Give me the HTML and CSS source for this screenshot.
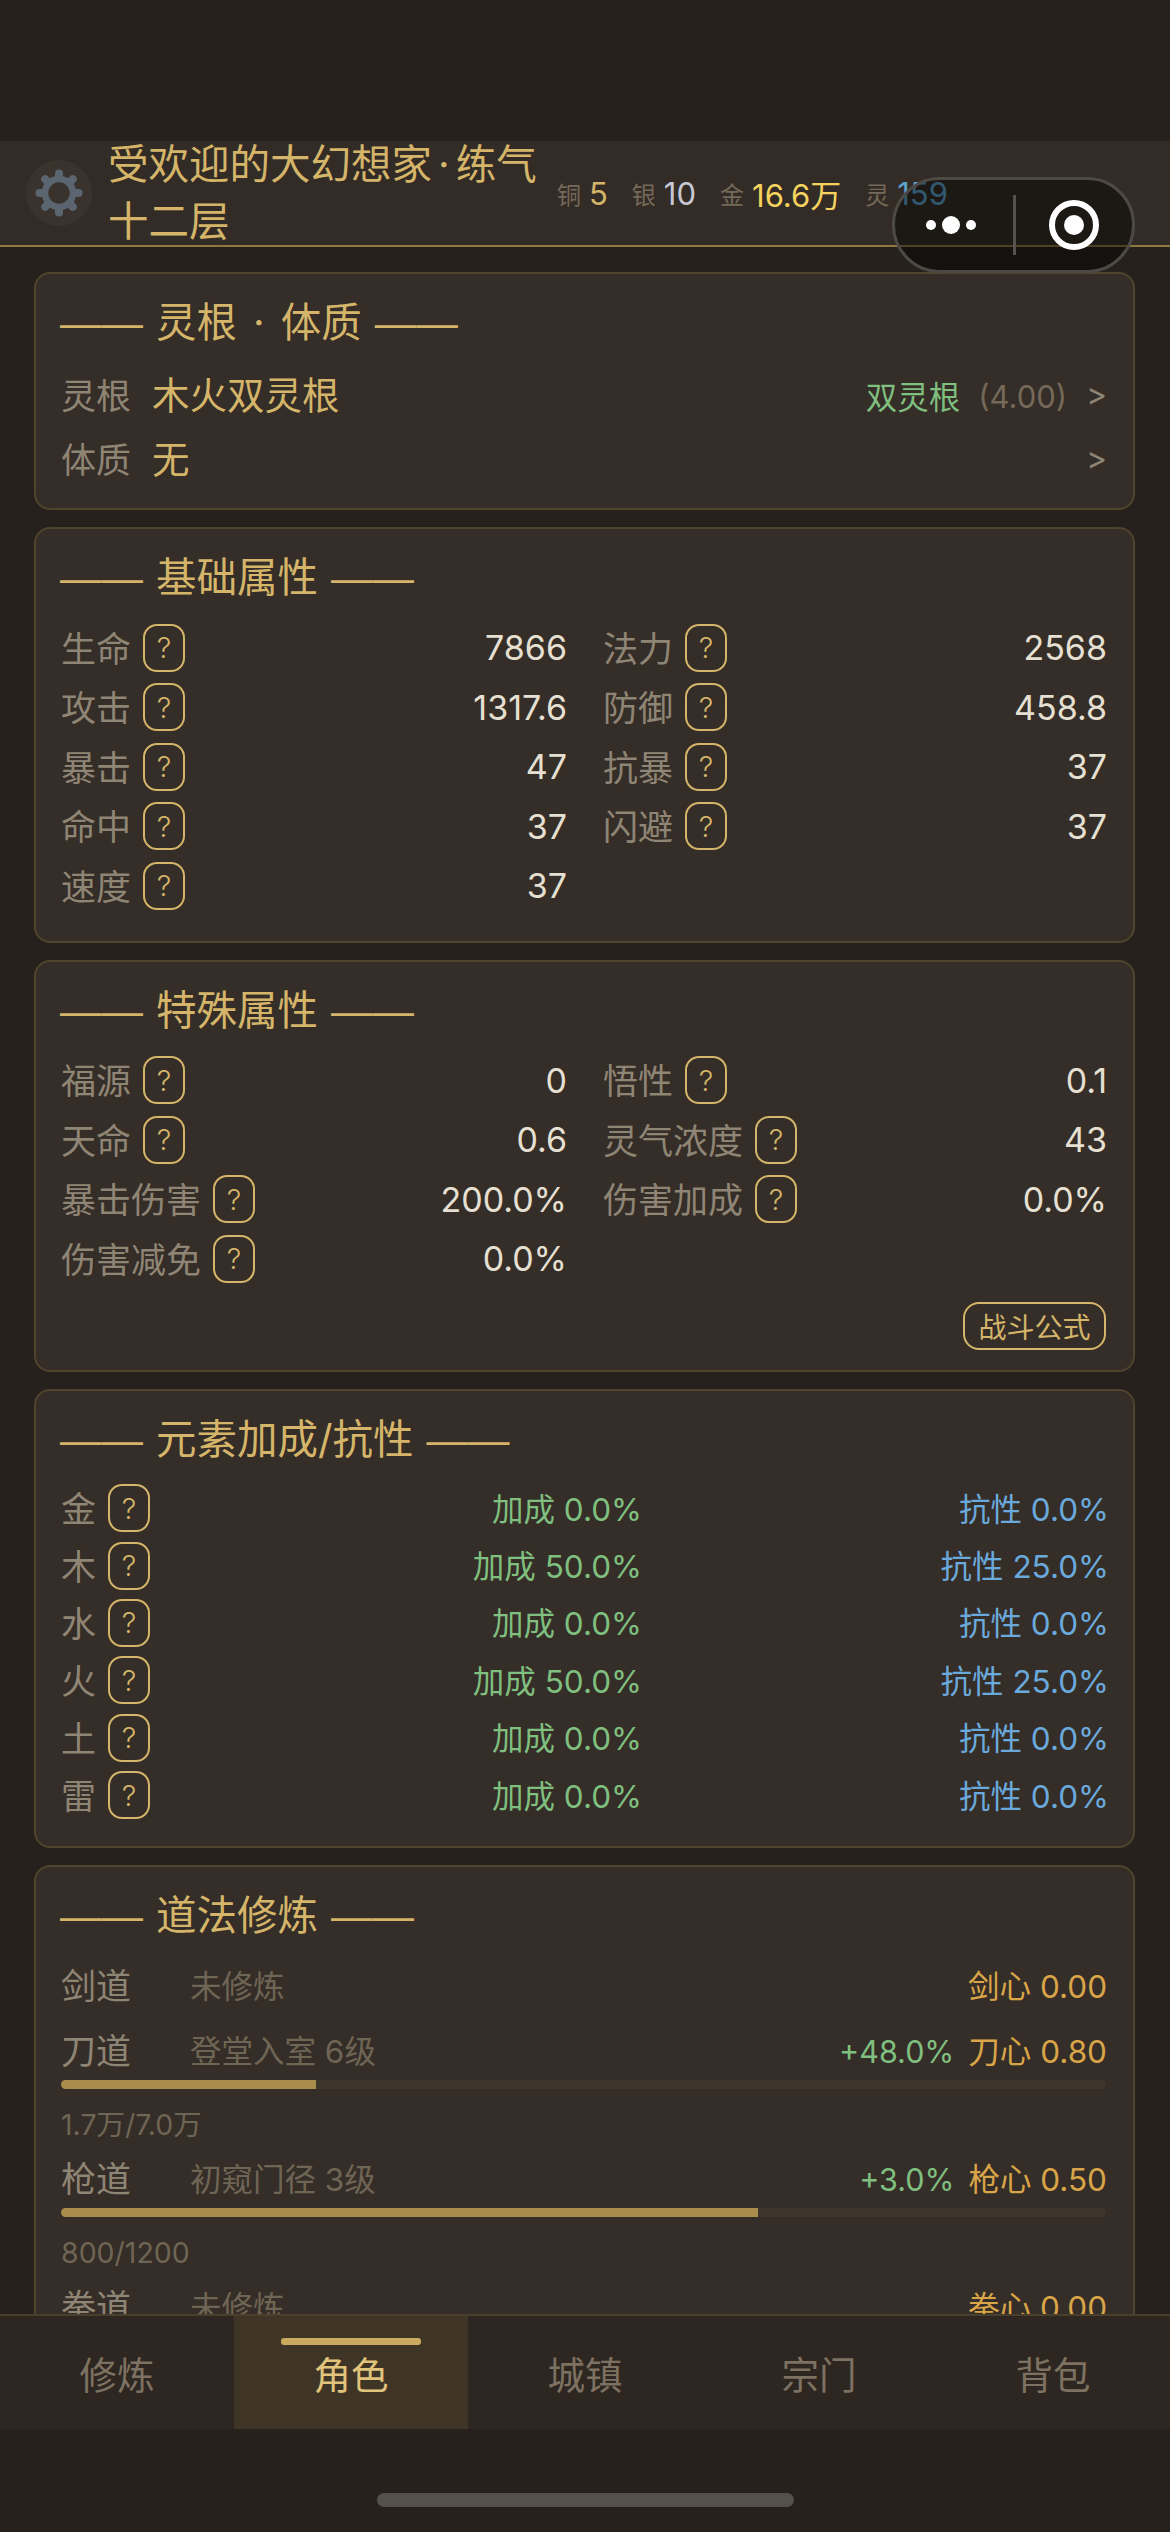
FILE: index.html
```html
<!DOCTYPE html>
<html lang="zh-CN">
<head>
    <meta charset="UTF-8" />
    <title>角色</title>
    <link rel="stylesheet" href="styles.css">
</head>
<body>
    <div class="status-bar"></div>

    <!-- Top bar: settings, player title, currencies -->
    <header class="top-bar">
        <div class="gear-btn">
            <svg width="48" height="48" viewBox="0 0 48 48">
                <circle cx="24" cy="24" r="14" fill="none" stroke="#5a6570" stroke-width="6.5"/>
                <g stroke="#5a6570" stroke-width="8" stroke-linecap="round">
                    <line x1="24" y1="9" x2="24" y2="4.5"/>
                    <line x1="24" y1="39" x2="24" y2="43.5"/>
                    <line x1="9" y1="24" x2="4.5" y2="24"/>
                    <line x1="39" y1="24" x2="43.5" y2="24"/>
                    <line x1="13.4" y1="13.4" x2="10.2" y2="10.2"/>
                    <line x1="34.6" y1="13.4" x2="37.8" y2="10.2"/>
                    <line x1="13.4" y1="34.6" x2="10.2" y2="37.8"/>
                    <line x1="34.6" y1="34.6" x2="37.8" y2="37.8"/>
                </g>
            </svg>
        </div>
        <div class="player-title">受欢迎的大幻想家<span class="name-dot">·</span>练气<br>十二层</div>
        <div class="currencies">
            <span class="cur"><i>铜</i><b class="copper">5</b></span>
            <span class="cur"><i>银</i><b class="silver">10</b></span>
            <span class="cur"><i>金</i><b class="gold">16.6万</b></span>
            <span class="cur"><i>灵</i><b class="spirit">159</b></span>
        </div>
    </header>

    <!-- WeChat mini program capsule, sits over the page -->
    <div class="capsule">
        <div class="capsule-dots"><span></span><span class="big"></span><span></span></div>
        <div class="capsule-line"></div>
        <div class="capsule-close"><span></span></div>
    </div>

    <main class="content">
        <section class="card">
            <h2 class="card-title"><span class="dash">——</span>灵根<span class="title-dot">·</span>体质<span class="dash">——</span></h2>
            <div class="root-row">
                <span class="label">灵根</span>
                <span class="root-val">木火双灵根</span>
                <span class="root-type">双灵根</span>
                <span class="root-score">(4.00)</span>
                <span class="arrow">&gt;</span>
            </div>
            <div class="root-row">
                <span class="label">体质</span>
                <span class="root-val">无</span>
                <span class="arrow">&gt;</span>
            </div>
        </section>

        <section class="card">
            <h2 class="card-title"><span class="dash">——</span>基础属性<span class="dash">——</span></h2>
            <div class="stat-grid">
                <div class="stat"><span class="label">生命</span><span class="q">?</span><span class="val">7866</span></div>
                <div class="stat"><span class="label">法力</span><span class="q">?</span><span class="val">2568</span></div>
                <div class="stat"><span class="label">攻击</span><span class="q">?</span><span class="val">1317.6</span></div>
                <div class="stat"><span class="label">防御</span><span class="q">?</span><span class="val">458.8</span></div>
                <div class="stat"><span class="label">暴击</span><span class="q">?</span><span class="val">47</span></div>
                <div class="stat"><span class="label">抗暴</span><span class="q">?</span><span class="val">37</span></div>
                <div class="stat"><span class="label">命中</span><span class="q">?</span><span class="val">37</span></div>
                <div class="stat"><span class="label">闪避</span><span class="q">?</span><span class="val">37</span></div>
                <div class="stat"><span class="label">速度</span><span class="q">?</span><span class="val">37</span></div>
            </div>
        </section>

        <section class="card">
            <h2 class="card-title"><span class="dash">——</span>特殊属性<span class="dash">——</span></h2>
            <div class="stat-grid">
                <div class="stat"><span class="label">福源</span><span class="q">?</span><span class="val">0</span></div>
                <div class="stat"><span class="label">悟性</span><span class="q">?</span><span class="val">0.1</span></div>
                <div class="stat"><span class="label">天命</span><span class="q">?</span><span class="val">0.6</span></div>
                <div class="stat"><span class="label">灵气浓度</span><span class="q">?</span><span class="val">43</span></div>
                <div class="stat"><span class="label">暴击伤害</span><span class="q">?</span><span class="val">200.0%</span></div>
                <div class="stat"><span class="label">伤害加成</span><span class="q">?</span><span class="val">0.0%</span></div>
                <div class="stat"><span class="label">伤害减免</span><span class="q">?</span><span class="val">0.0%</span></div>
            </div>
            <div class="formula-wrap"><button class="formula-btn">战斗公式</button></div>
        </section>

        <section class="card">
            <h2 class="card-title"><span class="dash">——</span>元素加成/抗性<span class="dash">——</span></h2>
            <div class="elem-list">
                <div class="elem"><span class="label">金</span><span class="q">?</span><span class="bonus">加成 0.0%</span><span class="resist">抗性 0.0%</span></div>
                <div class="elem"><span class="label">木</span><span class="q">?</span><span class="bonus">加成 50.0%</span><span class="resist">抗性 25.0%</span></div>
                <div class="elem"><span class="label">水</span><span class="q">?</span><span class="bonus">加成 0.0%</span><span class="resist">抗性 0.0%</span></div>
                <div class="elem"><span class="label">火</span><span class="q">?</span><span class="bonus">加成 50.0%</span><span class="resist">抗性 25.0%</span></div>
                <div class="elem"><span class="label">土</span><span class="q">?</span><span class="bonus">加成 0.0%</span><span class="resist">抗性 0.0%</span></div>
                <div class="elem"><span class="label">雷</span><span class="q">?</span><span class="bonus">加成 0.0%</span><span class="resist">抗性 0.0%</span></div>
            </div>
        </section>

        <section class="card">
            <h2 class="card-title"><span class="dash">——</span>道法修炼<span class="dash">——</span></h2>
            <div class="skill-list">
                <div class="skill">
                    <div class="skill-head"><span class="label skill-name">剑道</span><span class="realm">未修炼</span><span class="skill-right"><span class="heart">剑心 0.00</span></span></div>
                </div>
                <div class="skill">
                    <div class="skill-head"><span class="label skill-name">刀道</span><span class="realm">登堂入室 6级</span><span class="skill-right"><span class="gain">+48.0%</span><span class="heart">刀心 0.80</span></span></div>
                    <div class="bar"><div class="bar-fill" style="width: 24.4%"></div></div>
                    <div class="exp">1.7万/7.0万</div>
                </div>
                <div class="skill">
                    <div class="skill-head"><span class="label skill-name">枪道</span><span class="realm">初窥门径 3级</span><span class="skill-right"><span class="gain">+3.0%</span><span class="heart">枪心 0.50</span></span></div>
                    <div class="bar"><div class="bar-fill" style="width: 66.7%"></div></div>
                    <div class="exp">800/1200</div>
                </div>
                <div class="skill">
                    <div class="skill-head"><span class="label skill-name">拳道</span><span class="realm">未修炼</span><span class="skill-right"><span class="heart">拳心 0.00</span></span></div>
                </div>
            </div>
        </section>
    </main>

    <nav class="tab-bar">
        <a class="tab">修炼</a>
        <a class="tab active">角色</a>
        <a class="tab">城镇</a>
        <a class="tab">宗门</a>
        <a class="tab">背包</a>
    </nav>

    <div class="home-area"><div class="home-bar"></div></div>
</body>
</html>
```

FILE: styles.css
```css
* {
    box-sizing: border-box;
    margin: 0;
    padding: 0;
}

body {
    width: 1170px;
    height: 2532px;
    overflow: hidden;
    position: relative;
    display: flex;
    flex-direction: column;
    background: #26211c;
    color: #e6e0d3;
    font-family: Inter, "Noto Sans CJK SC", sans-serif;
}

.status-bar {
    height: 141px;
    flex-shrink: 0;
}

/* Top bar */
.top-bar {
    height: 106px;
    flex-shrink: 0;
    display: flex;
    align-items: center;
    background: #332c26;
    border-bottom: 2px solid #8f7840;
    padding-left: 26px;
}

.gear-btn {
    width: 66px;
    height: 66px;
    flex-shrink: 0;
    border-radius: 50%;
    background: #3a332d;
    display: flex;
    align-items: center;
    justify-content: center;
}

.player-title {
    width: 440px;
    margin-left: 16px;
    flex-shrink: 0;
    font-size: 40.5px;
    line-height: 57px;
    color: #d4b56a;
}

.name-dot {
    margin: 0 6px;
}

.currencies {
    display: flex;
    align-items: center;
    margin-left: 9px;
}

.cur {
    display: flex;
    align-items: center;
    margin-right: 24px;
}

.cur i {
    font-style: normal;
    font-size: 24px;
    color: #75695a;
    margin-right: 8px;
}

.cur b {
    font-weight: 400;
    font-size: 31px;
}

.copper { color: #d4b56a; }
.silver { color: #c8c8d4; }
.gold { color: #f4d35e; }
.spirit { color: #5ba3cc; }

/* Capsule */
.capsule {
    position: absolute;
    left: 892px;
    top: 177px;
    width: 243px;
    height: 96px;
    border-radius: 48px;
    border: 3px solid #4d4a46;
    background: rgba(0, 0, 0, 0.45);
    display: flex;
    align-items: center;
}

.capsule-dots {
    width: 112px;
    margin-right: 6px;
    display: flex;
    align-items: center;
    justify-content: center;
    gap: 6px;
}

.capsule-dots span {
    width: 10px;
    height: 10px;
    border-radius: 50%;
    background: #fff;
}

.capsule-dots .big {
    width: 18px;
    height: 18px;
}

.capsule-line {
    width: 3px;
    height: 60px;
    background: #55524e;
}

.capsule-close {
    width: 50px;
    height: 50px;
    margin-left: 33px;
    border: 6px solid #fff;
    border-radius: 50%;
    display: flex;
    align-items: center;
    justify-content: center;
}

.capsule-close span {
    width: 20px;
    height: 20px;
    border-radius: 50%;
    background: #fff;
}

/* Scroll area */
.content {
    flex: 1;
    min-height: 0;
    overflow: hidden;
    padding: 25px 35px 0 34px;
}

.card {
    background: #352d27;
    border: 2px solid #51442e;
    border-radius: 16px;
    padding: 21px 27px 17px 25px;
    margin-bottom: 17px;
}

.card-title {
    font-size: 40.5px;
    font-weight: 400;
    line-height: 56px;
    color: #d4b56a;
    margin-bottom: 12px;
    margin-left: -1px;
}

/* Section title rules are two em dashes */
.dash {
    font-family: "Liberation Sans", sans-serif;
    font-size: 41.5px;
    margin-right: 13px;
}

.dash:last-child {
    margin-right: 0;
    margin-left: 13px;
}

.title-dot {
    margin: 0 16px;
}

.label {
    font-size: 35px;
    padding-bottom: 3px;
    color: #8f8575;
    flex-shrink: 0;
}

/* 灵根 rows */
.root-row {
    height: 64px;
    display: flex;
    align-items: center;
}

.root-row .label {
    padding-bottom: 4px;
}

.root-val {
    font-size: 37.5px;
    padding-bottom: 6px;
    color: #d4b56a;
    margin-left: 21px;
}

.root-type {
    font-size: 31.5px;
    color: #7fbf7f;
    margin-left: auto;
}

.root-score {
    font-size: 31px;
    padding-top: 2px;
    color: #75695a;
    margin-left: 18px;
}

.arrow {
    font-size: 31.5px;
    padding-bottom: 2px;
    color: #8f8575;
    margin-left: 19px;
    margin-right: -1px;
}

.root-val + .arrow {
    margin-left: auto;
}

/* Stat grid */
.stat-grid {
    display: grid;
    grid-template-columns: 505px 503px;
    column-gap: 37px;
    grid-auto-rows: 59.5px;
    margin-bottom: 8px;
}

.stat {
    display: flex;
    align-items: center;
}

.q {
    width: 42px;
    height: 48px;
    margin-left: 12px;
    flex-shrink: 0;
    border: 2px solid #d4b56a;
    border-radius: 14px;
    display: flex;
    align-items: center;
    justify-content: center;
    font-size: 29px;
    font-weight: 300;
    color: #d4b56a;
}

.val {
    margin-left: auto;
    margin-right: -1px;
    font-size: 34px;
    color: #e6e0d3;
}

.formula-wrap {
    display: flex;
    justify-content: flex-end;
    margin-top: 13px;
    margin-bottom: 3px;
}

.formula-btn {
    width: 143px;
    height: 48px;
    background: none;
    border: 2px solid #d4b56a;
    border-radius: 16px;
    font-family: inherit;
    font-size: 28px;
    color: #d4b56a;
}

/* Element rows */
.elem-list {
    margin-bottom: 5px;
}

.elem {
    height: 57.4px;
    margin-right: -3px;
    display: flex;
    align-items: center;
}

.bonus {
    flex: 1;
    text-align: right;
    font-size: 31.5px;
    padding-bottom: 3px;
    color: #7fbf7f;
}

.resist {
    width: 467px;
    text-align: right;
    font-size: 31.5px;
    padding-bottom: 3px;
    color: #6aa9dc;
}

/* Dao rows */
.skill-list {
    padding-top: 3px;
}

.skill {
    margin-bottom: 15px;
}

.skill-head {
    height: 50px;
    display: flex;
    align-items: center;
}

.skill-name {
    width: 129px;
    padding-bottom: 0;
}

.realm {
    font-size: 31.5px;
    color: #6f6555;
}

.skill-right {
    margin-left: auto;
    margin-right: -1px;
    font-size: 31.5px;
}

.gain {
    font-size: 30.5px;
    color: #7fbf7f;
    margin-right: 14px;
}

.heart {
    color: #d9a548;
}

.bar {
    height: 9px;
    margin-top: 6px;
    background: #3e352c;
    border-radius: 5px;
    overflow: hidden;
}

.bar-fill {
    height: 100%;
    background: #a98d4a;
}

.exp {
    height: 27px;
    line-height: 30px;
    margin-top: 21px;
    font-size: 28.5px;
    color: #6f6555;
}

/* Bottom tabs */
.tab-bar {
    height: 115px;
    flex-shrink: 0;
    display: flex;
    background: #2e2620;
    border-top: 2px solid #4a3f2b;
}

.tab {
    flex: 1;
    position: relative;
    display: flex;
    align-items: center;
    justify-content: center;
    font-size: 37.5px;
    color: #7d7262;
}

.tab.active {
    background: #3f3526;
    color: #e0c47c;
}

/* Little bar on top of the selected tab */
.tab.active::before {
    content: "";
    position: absolute;
    top: 22px;
    left: 47px;
    width: 140px;
    height: 7px;
    border-radius: 3px;
    background: #c9aa5f;
}

.home-area {
    height: 103px;
    flex-shrink: 0;
    position: relative;
}

.home-bar {
    position: absolute;
    left: 377px;
    top: 64px;
    width: 417px;
    height: 14px;
    border-radius: 7px;
    background: #54504a;
}
```
